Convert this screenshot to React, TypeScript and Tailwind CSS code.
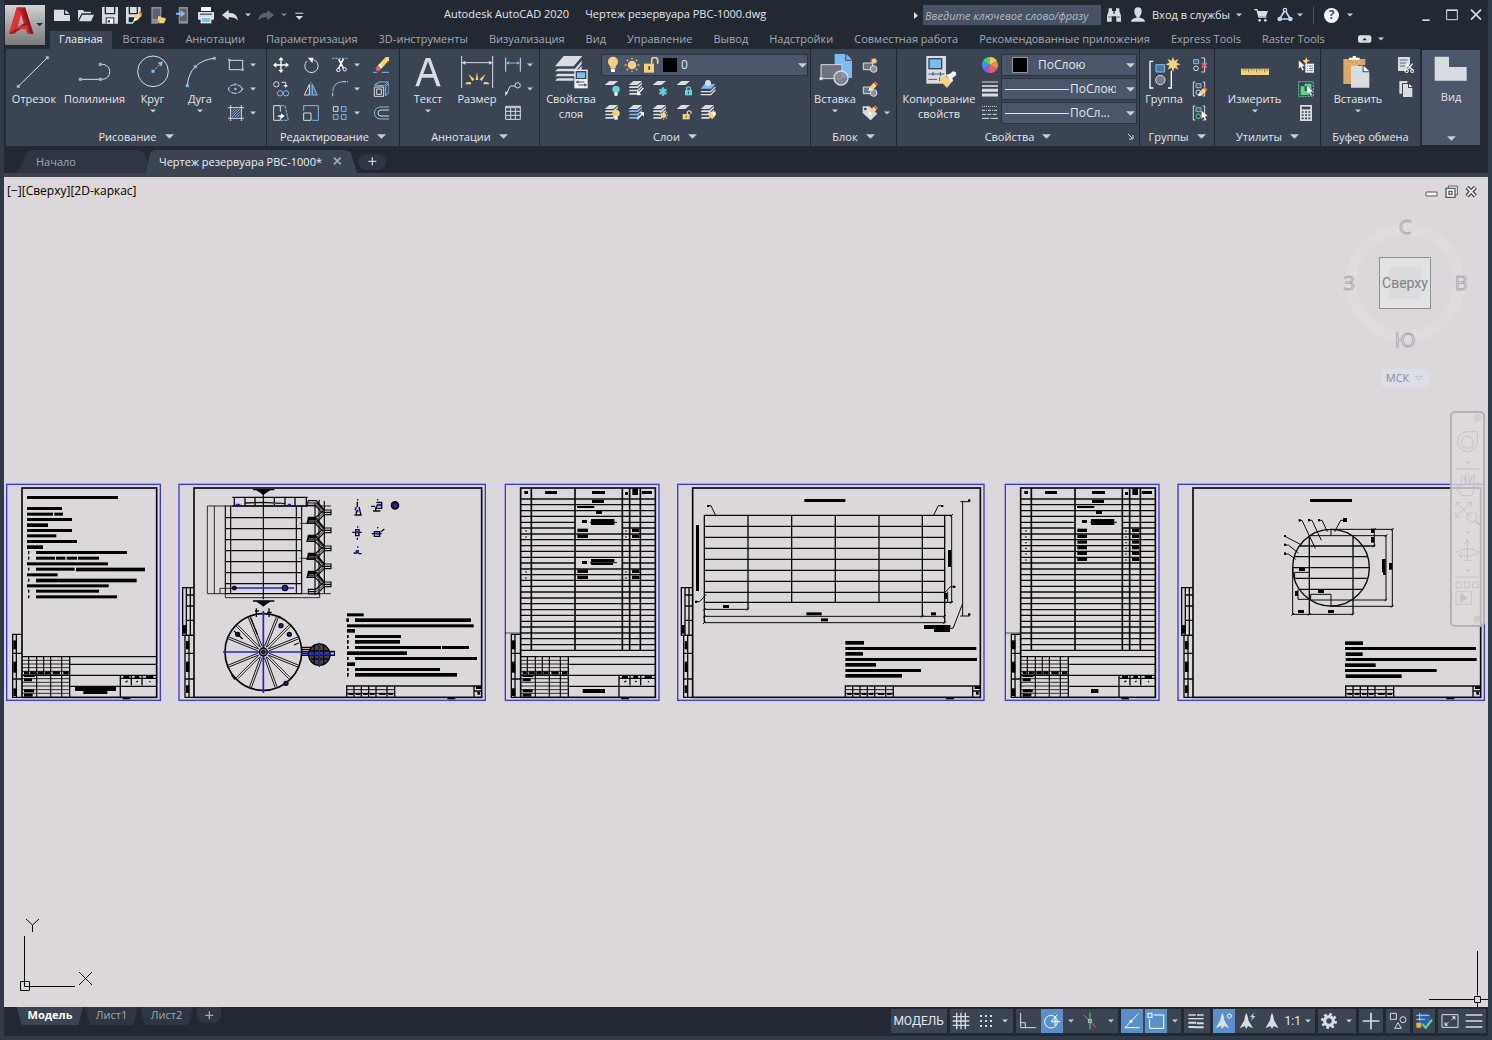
import React from 'react';

const L = '#d9dde2';
const B = '#7cbcf0';
const Y = '#f7d07c';
const R = '#e8625c';
const G = '#5fcf92';
const T = '#62d3d6';
const W = '#ffffff';
const D = '#3b4453';
const K = '#0a0a0c';

interface PicProps {
  w?: number;
  h?: number;
  children: React.ReactNode;
}

// Icons are drawn on a grid of three units per pixel
const Pic: React.FC<PicProps> = ({ w = 16, h = 16, children }) => (
  <svg width={w} height={h} viewBox={`0 0 ${w * 3} ${h * 3}`} fill="none" stroke="none" aria-hidden="true" className="shrink-0">
    {children}
  </svg>
);

const Caret: React.FC<{ small?: boolean; color?: string }> = ({ small, color = '#c9ced6' }) => (
  <svg width={small ? 6 : 9} height={small ? 4 : 5} viewBox="0 0 8 4" className="shrink-0" aria-hidden="true">
    <path d="M0 0h8l-4 4z" fill={color} />
  </svg>
);

const Dot = ({ x, y, s = 9, c = B }: { x: number; y: number; s?: number; c?: string }) => (
  <rect x={x - s / 2} y={y - s / 2} width={s} height={s} fill={c} />
);

const Pencil = () => (
  <g>
    <path d="M22 42l4-12 10 9z" fill={W} />
    <path d="M26 30l12-13 9 9-12 13z" fill={Y} />
    <path d="M38 17l4-4 9 8-4 5z" fill={R} />
  </g>
);

const Cursor = ({ x, y }: { x: number; y: number }) => (
  <path d={`M${x} ${y}v26l6-6 5 11 5-2-5-11h9z`} fill={W} stroke={D} strokeWidth="1" />
);

const Layers = ({ tint = L, one = false }: { tint?: string; one?: boolean }) => (
  <g>
    <path d="M16 3h26L28 15H2z" fill={L} />
    {!one && (
      <g fill={tint}>
        <path d="M6 19h22l14-12v5L30 24H2z" />
        <path d="M6 29h22l14-12v5L30 34H2z" />
        <path d="M6 39h20l8-8v5l-6 8H2z" />
      </g>
    )}
  </g>
);

const Bulb = ({ x, y, c }: { x: number; y: number; c: string }) => (
  <g>
    <circle cx={x} cy={y} r="11" fill={c} />
    <rect x={x - 5} y={y + 9} width="10" height="10" fill={W} />
  </g>
);

const rays = [0, 45, 90, 135, 180, 225, 270, 315];

const Sun = ({ x, y, r = 8 }: { x: number; y: number; r?: number }) => (
  <g>
    <circle cx={x} cy={y} r={r} fill={Y} />
    {rays.map((a) => (
      <path key={a} d={`M${x} ${y - r * 1.3}v${-r * 0.4}`} stroke={Y} strokeWidth="4" transform={`rotate(${a} ${x} ${y})`} />
    ))}
  </g>
);

const Lock = ({ x, y, c, open }: { x: number; y: number; c: string; open?: boolean }) => (
  <g>
    <rect x={x} y={y} width="21" height="16" fill={c} />
    <path d={open ? `M${x + 14} ${y}v-6a6 6 0 0 1 11 0v5` : `M${x + 5} ${y}v-6a6 6 0 0 1 11 0v6`} stroke={c} strokeWidth="4" />
    <rect x={x + 9} y={y + 5} width="3" height="6" fill={D} />
  </g>
);

const Star = ({ x, y, r }: { x: number; y: number; r: number }) => {
  const pts = Array.from({ length: 16 }, (_, i) => {
    const a = (Math.PI * i) / 8;
    const q = i % 2 ? r * 0.5 : r;
    return `${x + q * Math.sin(a)},${y - q * Math.cos(a)}`;
  }).join(' ');
  return <polygon points={pts} fill={Y} />;
};

/* ---------- title bar ---------- */

const AppLogo = () => (
  <svg width="40" height="40" viewBox="0 0 118 118" aria-hidden="true">
    <defs>
      <linearGradient id="appBg" x1="0" y1="0" x2="0" y2="1">
        <stop offset="0" stopColor="#d4d4d4" />
        <stop offset="0.5" stopColor="#a3a3a3" />
        <stop offset="1" stopColor="#7b7b7b" />
      </linearGradient>
    </defs>
    <rect width="118" height="118" fill="url(#appBg)" />
    <path d="M35 7h24l25 78H66L47 28 31 84H12z" fill="#c8202a" />
    <path d="M35 7l12 21-16 56H12z" fill="#e03038" />
    <path d="M12 84l46-32 12 6-48 27z" fill="#a01820" />
    <path d="M24 66l44-6 6 12-46-2z" fill="#d4323a" />
    <path d="M59 7l25 78-9 1L50 15z" fill="#98141c" />
    <path d="M92 53h20l-10 10z" fill="#2c2c2c" />
  </svg>
);

const quickTools: { name: string; icon: React.ReactNode }[] = [
  { name: 'Создать', icon: <><path d="M0 8h30v16h18v18H0z" fill={L} /><path d="M34 8l13 12H34z" fill={L} /></> },
  { name: 'Открыть', icon: <><path d="M0 40V9h15l4 5h20v5H11z" fill={L} /><path d="M13 23h35l-9 20H3z" fill={L} /></> },
  { name: 'Сохранить', icon: <><path d="M0 0h8v22h32V0h8v50H0z" fill={L} /><path d="M12 0h24v18H12z" fill={L} /><path d="M11 31h26v19H11z" fill="#222933" /><path d="M14 34h20v16H14z" fill={W} /><path d="M17 40h7v6h-7z" fill="#222933" /></> },
  { name: 'Сохранить как', icon: <><path d="M0 0h8v22h28V0h8v22L20 50H0z" fill={L} /><path d="M12 0h20v18H12z" fill={L} /><path d="M8 31h22v5L18 46H8z" fill="#222933" /><Pencil /></> },
  { name: 'Открыть из облака', icon: <><path d="M4 0h30v26H24v24H4z" fill="#8a9099" /><path d="M8 5h22v30H8z" fill="#5a626e" /><path d="M24 28h9l3 4h10v4H32l-8 12z" fill={Y} /><path d="M31 36h17l-6 13H25z" fill={Y} /></> },
  { name: 'Сохранить в облаке', icon: <><path d="M14 0h28v50H14z" fill="#8a9099" /><path d="M18 5h20v37H18z" fill="#5a626e" /><path d="M6 17h14V9l14 11-14 11v-8H6z" fill={B} /></> },
  { name: 'Печать', icon: <><path d="M9 0h30v12H9z" fill={W} /><path d="M0 15h48v23H0z" fill={L} /><path d="M6 20h36v3H6z" fill="#222933" /><path d="M8 31h32v18H8z" fill={W} /><path d="M11 33h26v13H11z" fill={B} /></> },
  { name: 'Отменить', icon: <path d="M0 24L20 8v9q26 0 28 24-8-11-28-10v9z" fill={L} /> },
];

const TitleBar = () => (
  <div className="flex h-[28px] items-center text-[#e3e6ea]">
    <div className="flex w-[390px] items-center gap-2 pt-[2px]">
      {quickTools.map((t) => (
        <button key={t.name} type="button" aria-label={t.name}>
          <Pic h={17}>{t.icon}</Pic>
        </button>
      ))}
      <span className="-mx-px"><Caret small /></span>
      <button type="button" aria-label="Повторить">
        <Pic h={17}><path d="M48 24L28 8v9Q2 17 0 41q8-11 28-10v9z" fill="#5a636f" /></Pic>
      </button>
      <span className="-ml-px"><Caret small color="#7b838f" /></span>
      <button type="button" aria-label="Настройка панели">
        <Pic w={9} h={17}><path d="M1 17h24v3H1zM2 27h22L13 38z" fill={L} /></Pic>
      </button>
    </div>
    <div className="flex gap-4 whitespace-nowrap">
      <span>Autodesk AutoCAD 2020</span>
      <span>Чертеж резервуара РВС-1000.dwg</span>
    </div>
    <div className="ml-auto flex items-center pt-[2px]">
      <Pic w={6} h={9}><path d="M3 3v21l12-10z" fill={L} /></Pic>
      <input
        aria-label="Поиск"
        placeholder="Введите ключевое слово/фразу"
        className="ml-1 h-5 w-[178px] bg-[#475264] px-[2px] italic placeholder:text-[#b4bac4]"
      />
      <button type="button" aria-label="Найти" className="ml-[5px]">
        <Pic><path d="M8 4h10v8h4v8h4v-8h4V4h10v8l5 14v18H31V28H17v16H3V26l5-14z" fill={L} /><path d="M6 30h10M33 30h10" stroke="#222933" strokeWidth="2" /></Pic>
      </button>
      <button type="button" className="ml-2 flex items-center gap-[6px]">
        <Pic><path d="M13 14q0-13 11-13t11 13q-1 10-6 13v5h-10v-5q-5-3-6-13z" fill={L} /><path d="M3 44q1-10 16-12h10q15 2 16 12z" fill={L} /></Pic>
        Вход в службы
        <Caret small />
      </button>
      <button type="button" aria-label="Магазин" className="ml-[11px]">
        <Pic><path d="M4 8h8l6 22h22" stroke={L} strokeWidth="4" /><path d="M12 12h33l-6 16H17z" fill={L} /><circle cx="20" cy="40" r="4" fill={L} /><circle cx="37" cy="40" r="4" fill={L} /></Pic>
      </button>
      <button type="button" aria-label="Autodesk 360" className="ml-2 flex items-center gap-1">
        <Pic><path d="M24 9L8 36h32z" stroke="#c5d4f2" strokeWidth="5" /><circle cx="24" cy="9" r="7" fill="#c5d4f2" /><circle cx="8" cy="36" r="7" fill="#c5d4f2" /><circle cx="40" cy="36" r="7" fill="#c5d4f2" /><circle cx="24" cy="9" r="3" fill="#222933" /></Pic>
        <Caret small />
      </button>
      <span className="ml-[10px] h-[18px] w-px bg-[#4a5361]" />
      <button type="button" aria-label="Справка" className="ml-[10px] flex items-center gap-2">
        <span className="flex size-[15px] items-center justify-center rounded-full bg-[#f2f5fa] text-[12px] font-bold text-[#2b50a8]">?</span>
        <Caret small />
      </button>
      <button type="button" aria-label="Свернуть" className="ml-[68px]">
        <Pic w={12} h={14}><path d="M4 34h22v5H4z" fill={L} /></Pic>
      </button>
      <button type="button" aria-label="Развернуть" className="ml-[13px]">
        <Pic w={12} h={14}><path d="M2 6h32v29H2z" stroke={L} strokeWidth="3" /><path d="M1 7h34" stroke={L} strokeWidth="4" /></Pic>
      </button>
      <button type="button" aria-label="Закрыть" className="mr-[6px] ml-[12px]">
        <Pic w={12} h={14}><path d="M3 5l30 30M33 5L3 35" stroke={L} strokeWidth="5" /></Pic>
      </button>
    </div>
  </div>
);

const menuTabs = ['Вставка', 'Аннотации', 'Параметризация', '3D-инструменты', 'Визуализация', 'Вид', 'Управление', 'Вывод', 'Надстройки', 'Совместная работа', 'Рекомендованные приложения', 'Express Tools', 'Raster Tools'];

const MenuTabs = () => (
  <nav className="flex h-[21px] items-end gap-px text-[#a3a9b3]">
    <button type="button" className="h-[18px] bg-[#3b4453] px-[9px] pb-[3px] leading-[15px] text-[#eef0f3]">Главная</button>
    {menuTabs.map((t) => (
      <button key={t} type="button" className="h-[18px] px-[10px] pb-[3px] leading-[15px] whitespace-nowrap">{t}</button>
    ))}
    <button type="button" aria-label="Свернуть ленту" className="ml-[22px] flex h-[20px] items-center gap-[6px]">
      <Pic w={14} h={8}><rect x="0" y="1" width="40" height="22" rx="6" fill={L} /><path d="M13 16h14l-7-8z" fill="#222933" /></Pic>
      <Caret small />
    </button>
  </nav>
);

/* ---------- ribbon ---------- */

interface PanelProps {
  title: string;
  grow: string;
  caret?: boolean;
  corner?: boolean;
  children: React.ReactNode;
}

const Panel: React.FC<PanelProps> = ({ title, grow, caret = true, corner, children }) => (
  <section className={`flex h-[97px] basis-0 flex-col bg-[#3b4453] ${grow}`}>
    <div className="flex h-[78px] pt-1">{children}</div>
    <div className="flex h-[19px] items-center">
      <button type="button" className="flex flex-1 items-center justify-center gap-2 whitespace-nowrap">
        {title}
        {caret && <Caret />}
      </button>
      {corner && (
        <button type="button" aria-label="Параметры панели" className="mr-[5px] -ml-3">
          <Pic w={7} h={7}><path d="M3 3l12 12M18 6v12H6" stroke={L} strokeWidth="3" /></Pic>
        </button>
      )}
    </div>
  </section>
);

interface BigProps {
  label: string;
  second?: string;
  width: string;
  caret?: boolean;
  children: React.ReactNode;
}

const Big: React.FC<BigProps> = ({ label, second, width, caret, children }) => (
  <button type="button" className={`flex shrink-0 flex-col items-center pt-px leading-[15px] ${width}`}>
    <Pic w={36} h={36}>{children}</Pic>
    <span className="mt-px whitespace-nowrap">{label}</span>
    {second && <span>{second}</span>}
    {caret && <span className="mt-[3px]"><Caret small /></span>}
  </button>
);

const Small: React.FC<{ name: string; caret?: boolean; children: React.ReactNode }> = ({ name, caret, children }) => (
  <button type="button" aria-label={name} className="flex h-6 items-center gap-[6px]">
    <Pic>{children}</Pic>
    {caret && <Caret small />}
  </button>
);

const DrawPanel = () => (
  <Panel title="Рисование" grow="grow-[260]">
    <Big label="Отрезок" width="w-[56px]"><path d="M7 97L94 11" stroke={L} strokeWidth="3" /><Dot x={94} y={11} /><Dot x={7} y={97} /></Big>
    <Big label="Полилиния" width="w-[65px]"><path d="M10 76h66a22 22 0 0 0 0-45h-6" stroke={L} strokeWidth="3" /><Dot x={10} y={76} /><Dot x={70} y={76} /><Dot x={70} y={31} /></Big>
    <Big label="Круг" width="w-[51px]" caret><circle cx="54" cy="52" r="46" stroke={L} strokeWidth="3" /><Dot x={54} y={52} /><path d="M60 46l14-14" stroke={B} strokeWidth="3" strokeDasharray="9 3" /><path d="M84 22L80 38 68 26z" fill={B} /></Big>
    <Big label="Дуга" width="w-[44px]" caret><path d="M16 95Q19 58 40 38 62 16 97 13" stroke={L} strokeWidth="3" /><Dot x={97} y={13} /><Dot x={40} y={38} /><Dot x={16} y={95} /></Big>
    <div className="ml-[6px] flex flex-col">
      <Small name="Прямоугольник" caret><path d="M4 10h40v28H4z" stroke={L} strokeWidth="3" /><Dot x={4} y={9} s={7} /><Dot x={44} y={38} s={7} /></Small>
      <Small name="Эллипс" caret><ellipse cx="22" cy="24" rx="20" ry="13" stroke={L} strokeWidth="3" strokeDasharray="17 4" /><Dot x={22} y={24} s={7} /><Dot x={43} y={24} s={6} /><Dot x={22} y={10} s={6} /></Small>
      <Small name="Штриховка" caret><path d="M8 0v48M40 0v48M0 8h48M0 40h48" stroke={L} strokeWidth="3" /><path d="M12 20l8-8M12 28l16-16M12 36l24-24M20 36l16-16M28 36l8-8" stroke={B} strokeWidth="3" /></Small>
    </div>
  </Panel>
);

const EditPanel = () => (
  <Panel title="Редактирование" grow="grow-[132]">
    <div className="ml-[6px] grid auto-rows-[24px] grid-cols-[30px_29px_41px_16px]">
      <Small name="Перенести"><path d="M24 8v32M8 24h32" stroke={W} strokeWidth="4" /><path d="M24 0l8 10H16zM24 48l8-10H16zM0 24l10-8v16zM48 24l-10-8v16z" fill={W} /></Small>
      <Small name="Повернуть"><path d="M32 8A20 20 0 1 1 12 12" stroke={L} strokeWidth="3" /><path d="M14 2h18l-4 16z" fill={W} /></Small>
      <Small name="Обрезать" caret><path d="M0 4h48" stroke={B} strokeWidth="3" strokeDasharray="7 3" /><path d="M20 6l14 28M34 6L20 34" stroke={W} strokeWidth="5" /><circle cx="19" cy="39" r="5" stroke={W} strokeWidth="3" /><circle cx="38" cy="37" r="5" stroke={W} strokeWidth="3" /></Small>
      <Small name="Стереть"><path d="M0 46h12M26 46h22" stroke={B} strokeWidth="3" /><path d="M14 26L38 0h10v10L24 36z" fill={Y} /><path d="M14 26l10 10-6 6q-4 2-8-2t-2-8z" fill={R} /><path d="M16 24l3-3 9 9-3 4z" fill={W} /></Small>
      <Small name="Копировать"><circle cx="10" cy="10" r="8" stroke={L} strokeWidth="3" /><path d="M26 4h12v10" stroke={L} strokeWidth="3" /><path d="M31 12h14l-7 8z" fill={W} /><circle cx="21" cy="37" r="8" stroke={B} strokeWidth="3" /><circle cx="39" cy="37" r="8" stroke={B} strokeWidth="3" /></Small>
      <Small name="Зеркало"><path d="M19 10v32H4z" stroke={L} strokeWidth="3" /><path d="M28 10v32h15z" stroke={B} strokeWidth="3" fill="#46678a" /><path d="M24 2v44" stroke={B} strokeWidth="2" /></Small>
      <Small name="Сопряжение" caret><path d="M2 46V34M32 2h16" stroke={L} strokeWidth="3" strokeDasharray="10 3" /><path d="M2 32Q4 4 32 2" stroke={B} strokeWidth="3" /></Small>
      <Small name="Расчленить"><path d="M4 18h28v28H4zM11 24h14v16H11z" stroke={L} strokeWidth="3" /><path d="M4 12L18 3h28L34 14zM38 16l10-8v26L38 44z" stroke={B} strokeWidth="3" /></Small>
      <Small name="Растянуть"><path d="M22 32V46H2V2h20v18" stroke={L} strokeWidth="3" /><path d="M24 2h12l10 44H22" stroke={B} strokeWidth="3" strokeDasharray="9 3" /><path d="M14 33h14" stroke={W} strokeWidth="4" /><path d="M24 25l11 8-11 8z" fill={W} /></Small>
      <Small name="Масштаб"><path d="M2 18V2h44v44H28" stroke={B} strokeWidth="3" /><path d="M2 24h22v22H2z" stroke={L} strokeWidth="3" /></Small>
      <Small name="Массив" caret><path d="M4 5h14v14H4z" stroke={L} strokeWidth="3" /><path d="M28 5h14v14H28zM4 29h14v14H4zM28 29h14v14H28z" stroke={B} strokeWidth="3" /></Small>
      <Small name="Подобие"><path d="M48 6H22a18 18 0 0 0 0 36h26" stroke={B} strokeWidth="3" /><path d="M48 15H24a9 9 0 0 0 0 18h24" stroke={L} strokeWidth="3" /></Small>
    </div>
  </Panel>
);

const AnnotationPanel = () => (
  <Panel title="Аннотации" grow="grow-[139]">
    <Big label="Текст" width="w-[56px]" caret><path d="M16 97L47 12h14l31 85H80l-9-26H36l-9 26zM40 60h28L54 22z" fill={L} fillRule="evenodd" /></Big>
    <Big label="Размер" width="w-[42px]">
      <path d="M8 6v96M101 6v96M12 26h86" stroke={L} strokeWidth="3" />
      <path d="M8 26l11-6v12zM101 26l-11-6v12z" fill={L} />
      <path d="M50 78l4-24 4 24zM40 82L28 60l18 15zM68 82l12-22-18 15zM36 91H18q4-10 18-6zM74 91h18q-4-10-18-6z" fill={Y} />
    </Big>
    <div className="ml-[7px] flex flex-col">
      <Small name="Линейный размер" caret><path d="M2 2v42M46 2v42" stroke={L} strokeWidth="3" /><path d="M6 18h36" stroke={B} strokeWidth="3" /><path d="M3 18l9-5v10zM45 18l-9-5v10z" fill={B} /></Small>
      <Small name="Выноска" caret><circle cx="38" cy="13" r="8" stroke={L} strokeWidth="3" /><path d="M30 15H16L4 38" stroke={L} strokeWidth="3" /><path d="M0 45l1-14 9 4z" fill={L} /></Small>
      <Small name="Таблица"><path d="M2 4h44v39H2zM2 8h44M2 19h44M2 31h44M17 10v33M31 10v33" stroke={L} strokeWidth="3" /></Small>
    </div>
  </Panel>
);

const LayerPanel = () => (
  <Panel title="Слои" grow="grow-[270]">
    <Big label="Свойства" second="слоя" width="w-[62px]">
      <path d="M32 6h56L62 37H6z" fill={L} />
      <path d="M14 44h52l20-24v10L68 52H6zM14 59h52l20-24v10L66 67H6zM14 73h48v7H6z" fill={L} />
      <path d="M64 47h40v56H64z" fill="#eef0f3" />
      <path d="M68 51h32v24H68z" fill="#3b4453" />
      <path d="M72 55h24v17H72z" fill={B} />
      <path d="M70 84h24M76 93h24" stroke="#4b5563" strokeWidth="3" />
      <path d="M76 79v10l-8-5zM94 88v10l8-5z" fill="#4b5563" />
    </Big>
    <div className="mr-[2px] -ml-px flex flex-1 flex-col">
      <div className="mt-px flex h-[22px] items-center border border-[#2a323e] bg-[#4b566a] pl-[3px]">
        <Pic h={18}><circle cx="24" cy="17" r="15" fill={Y} /><path d="M16 25h16v12H16z" fill={Y} /><path d="M18 38h12v10H18z" fill={W} /></Pic>
        <span className="ml-[3px]"><Pic><Sun x={24} y={24} r={13} /></Pic></span>
        <span className="ml-[3px]"><Pic><path d="M3 20h30v27H3z" fill={Y} /><path d="M26 20V10a9 9 0 0 1 18 0v10" stroke={Y} strokeWidth="5" /><path d="M16 28h5v10h-5z" fill={D} /></Pic></span>
        <span className="ml-[4px] size-[14px] bg-black" />
        <select aria-label="Слой" className="ml-1 flex-1 appearance-none bg-transparent text-[12px]">
          <option>0</option>
        </select>
        <Caret />
      </div>
      <div className="ml-[3px] grid w-[120px] auto-rows-[24px] grid-cols-5">
        <Small name="Отключить слой"><Layers one /><Bulb x={36} y={28} c={T} /></Small>
        <Small name="Изолировать слой"><Layers /><path d="M46 24L32 40" stroke={W} strokeWidth="4" /><path d="M27 46V32l13 13z" fill={W} /></Small>
        <Small name="Заморозить слой"><Layers one /><path d="M33 22v26M22 28l22 14M44 28L22 42" stroke={T} strokeWidth="5" /><circle cx="33" cy="35" r="9" stroke={T} strokeWidth="3" /></Small>
        <Small name="Блокировать слой"><Layers one /><Lock x={27} y={30} c={T} /></Small>
        <Small name="Сделать текущим"><path d="M14 12h32L34 26H2z" fill={B} /><circle cx="24" cy="9" r="9" fill={L} /><path d="M2 35h30l14-14M2 44h30l14-14" stroke={L} strokeWidth="4" /></Small>
        <Small name="Включить все слои"><Layers /><Bulb x={36} y={28} c={Y} /></Small>
        <Small name="Отменить изоляцию"><Layers tint={B} /><path d="M28 46l14-16" stroke={W} strokeWidth="4" /><path d="M48 24v14L35 25z" fill={W} /></Small>
        <Small name="Разморозить все слои"><Layers /><Sun x={35} y={34} r={8} /></Small>
        <Small name="Разблокировать слой"><Layers one /><Lock x={20} y={30} c={Y} open /></Small>
        <Small name="Копировать свойства слоя"><Layers /><path d="M22 28l10-6 14 14-10 10z" fill={Y} /><path d="M34 26l12-4 2 10-6 4z" fill={W} /></Small>
      </div>
    </div>
  </Panel>
);

const BlockGlyph = () => (
  <g>
    <path d="M4 18h28v20H4z" fill="#6c7480" stroke={L} strokeWidth="3" />
    <circle cx="35" cy="36" r="10" fill="#8a919c" stroke={L} strokeWidth="3" />
  </g>
);

const BlockPanel = () => (
  <Panel title="Блок" grow="grow-[85]">
    <Big label="Вставка" width="w-[48px]" caret>
      <path d="M53 0h32v20h20v52H53z" fill={B} /><path d="M88 0l17 17H88z" fill={B} />
      <path d="M12 32h63v42H12z" fill="#6c7480" stroke={L} strokeWidth="3" />
      <circle cx="72" cy="72" r="21" fill="#868d98" fillOpacity="0.85" stroke={L} strokeWidth="4" />
      <Dot x={12} y={74} c={L} />
    </Big>
    <div className="ml-[3px] flex flex-col">
      <Small name="Создать блок"><BlockGlyph /><Star x={36} y={12} r={12} /></Small>
      <Small name="Редактор блоков"><BlockGlyph /><g transform="translate(-3 -12)"><Pencil /></g></Small>
      <Small name="Атрибуты" caret><path d="M2 4h20l24 22-20 20L2 24z" fill={L} /><circle cx="10" cy="12" r="4" fill={D} /><g transform="translate(-3 -12)"><Pencil /></g></Small>
    </div>
  </Panel>
);

const colorWheel = [['#f7c948', 0], ['#f08a3c', 60], ['#ef5b6e', 120], ['#8c5bd6', 180], ['#3f8ee8', 240], ['#4fc98a', 300]] as const;

const comboBox = 'flex h-[22px] items-center border border-[#2a323e] bg-[#4b566a] pr-px text-[12px]';

const PropertiesPanel = () => (
  <Panel title="Свойства" grow="grow-[242]" corner>
    <Big label="Копирование" second="свойств" width="w-[84px]">
      <path d="M16 6h59v83H16z" fill={L} /><path d="M22 12h42v34H22z" fill="#3b4453" /><path d="M26 16h34v26H26z" fill={B} />
      <path d="M22 60h48M22 76h26M36 54v12M56 70v12M58 54v12" stroke="#4b5563" strokeWidth="3" />
      <path d="M56 78l16-14 20 20-14 18z" fill={Y} /><path d="M74 62l12-2 10-8 8 2 2 9-12 10 2 8-6 4z" fill={W} />
    </Big>
    <div className="ml-px flex flex-col">
      <Small name="Цвет">
        {colorWheel.map(([c, a]) => (
          <path key={c} d="M24 24V0a24 24 0 0 1 20.8 12z" fill={c} transform={`rotate(${a} 24 24)`} />
        ))}
      </Small>
      <Small name="Вес линий"><path d="M0 3h48" stroke={L} strokeWidth="3" /><path d="M0 15h48" stroke={L} strokeWidth="5" /><path d="M0 28h48M0 42h48" stroke={L} strokeWidth="9" /></Small>
      <Small name="Тип линий"><path d="M0 4h48" stroke={L} strokeWidth="3" strokeDasharray="3 3" /><path d="M0 16h48" stroke={L} strokeWidth="3" strokeDasharray="9 3 3 3" /><path d="M0 28h48" stroke={L} strokeWidth="3" strokeDasharray="12 4" /><path d="M0 40h48" stroke={L} strokeWidth="3" strokeDasharray="22 4" /></Small>
    </div>
    <div className="mr-[2px] ml-[3px] flex min-w-0 flex-1 flex-col gap-[2px] pt-px">
      <label className={comboBox}>
        <span className="mx-[10px] size-4 shrink-0 border border-[#8d96a3] bg-black" />
        <select aria-label="Цвет объекта" className="min-w-0 flex-1 appearance-none bg-transparent"><option>ПоСлою</option></select>
        <Caret />
      </label>
      <label className={comboBox}>
        <span className="ml-[3px] h-px w-16 shrink-0 bg-[#e3e6ea]" />
        <select aria-label="Вес линии" className="mr-[10px] w-[47px] min-w-0 flex-1 appearance-none overflow-hidden bg-transparent pl-px"><option>ПоСлою</option></select>
        <Caret />
      </label>
      <label className={comboBox}>
        <span className="ml-[3px] h-px w-16 shrink-0 bg-[#e3e6ea]" />
        <select aria-label="Тип линии" className="min-w-0 flex-1 appearance-none bg-transparent pl-px"><option>ПоСл...</option></select>
        <Caret />
      </label>
    </div>
  </Panel>
);

const GroupGlyph = ({ c = B }: { c?: string }) => (
  <g strokeWidth="3">
    <path d="M10 3H4v42h6M32 3h6v42h-6" stroke={L} />
    <path d="M12 8h15v12H12z" stroke={c} fill="#4a6078" />
    <circle cx="19" cy="34" r="7" stroke={c === B ? L : c} />
  </g>
);

const GroupsPanel = () => (
  <Panel title="Группы" grow="grow-[74]">
    <Big label="Группа" width="w-[48px]">
      <path d="M22 22H12v80h10M66 102h10V50" stroke={W} strokeWidth="4" />
      <path d="M30 32h26v22H30z" fill="#4a78a4" stroke={B} strokeWidth="3" />
      <circle cx="43" cy="78" r="14" fill="#747b86" stroke={L} strokeWidth="3" />
      <Star x={81} y={31} r={23} />
    </Big>
    <div className="ml-1 flex flex-col">
      <Small name="Разгруппировать"><path d="M28 3h10v42H28" stroke={L} strokeWidth="3" /><path d="M5 8h15v12H5z" stroke={B} strokeWidth="3" fill="#4a6078" /><circle cx="12" cy="34" r="7" stroke={L} strokeWidth="3" /><path d="M30 18l14 14M44 18L30 32" stroke={R} strokeWidth="6" /></Small>
      <Small name="Редактирование группы"><GroupGlyph /><g transform="translate(-4 4)"><Pencil /></g></Small>
      <Small name="Выбор группы"><GroupGlyph c={G} /><Cursor x={28} y={16} /></Small>
    </div>
  </Panel>
);

const UtilitiesPanel = () => (
  <Panel title="Утилиты" grow="grow-[105]">
    <Big label="Измерить" width="w-[79px]" caret>
      <path d="M12 44h84v19H12z" fill={Y} />
      <path d="M19 44v7M27 44v7M35 44v11M43 44v7M51 44v7M59 44v11M67 44v7M75 44v7M83 44v11M91 44v7" stroke="#5a5140" strokeWidth="2" />
    </Big>
    <div className="ml-1 flex flex-col">
      <Small name="Быстрый выбор"><path d="M14 10l8-2 3-8 3 8 8 3-8 3-3 8z" fill={Y} /><path d="M22 20h26v27H22z" fill={W} /><path d="M26 27h4M33 27h12M26 34h4M33 34h12M26 41h4M33 41h12" stroke="#3f7fc4" strokeWidth="3" /><Cursor x={2} y={10} /></Small>
      <Small name="Выбрать все"><path d="M2 2h44v44H2z" stroke={G} strokeWidth="3" strokeDasharray="6 3" /><path d="M8 16h12v14h14v12H8zM20 8h20v22H26V16h-6z" fill={G} /><Cursor x={27} y={14} /></Small>
      <Small name="Калькулятор"><path d="M6 0h36v48H6z" fill={L} /><path d="M11 5h26v8H11z" fill={D} /><path d="M11 21h26M11 30h26M11 40h26" stroke={D} strokeWidth="5" strokeDasharray="6 4" /></Small>
    </div>
  </Panel>
);

const ClipboardPanel = () => (
  <Panel title="Буфер обмена" grow="grow-[99]" caret={false}>
    <Big label="Вставить" width="w-[74px]" caret>
      <path d="M10 15h66v18H54v57H10z" fill="#dda865" />
      <path d="M27 18v-7h10q0-6 6-6t6 6h10v7z" fill={W} />
      <path d="M33 35h35v20h20v46H33z" fill={L} /><path d="M71 35l17 17H71z" fill={W} />
    </Big>
    <div className="ml-[3px] flex flex-col">
      <Small name="Вырезать"><path d="M0 0h36v20L22 42H0z" fill={L} /><path d="M5 9h24M5 18h20M5 27h16" stroke="#626b78" strokeWidth="3" /><path d="M26 20l18 20M44 20L26 40" stroke={W} strokeWidth="4" /><circle cx="26" cy="42" r="5" stroke={W} strokeWidth="3" /><circle cx="43" cy="42" r="5" stroke={W} strokeWidth="3" /></Small>
      <Small name="Копировать в буфер"><path d="M4 0h24v6H12v32H4z" fill={L} /><path d="M15 9h15v12h13v27H15z" fill={L} /><path d="M33 9l10 9H33z" fill={W} /></Small>
    </div>
  </Panel>
);

const Ribbon = () => (
  <div className="mr-[8px] ml-[2px] flex gap-px text-[#e3e6ea]">
    <DrawPanel />
    <EditPanel />
    <AnnotationPanel />
    <LayerPanel />
    <BlockPanel />
    <PropertiesPanel />
    <GroupsPanel />
    <UtilitiesPanel />
    <ClipboardPanel />
    <button type="button" className="mt-px ml-px flex h-[95px] grow-[58] basis-0 flex-col items-center bg-[#4b566a] pt-[3px]">
      <Pic w={36} h={36}><path d="M5 11h43v31h53v41H5z" fill={L} /></Pic>
      <span className="leading-[15px]">Вид</span>
      <span className="mt-auto mb-[4px]"><Caret /></span>
    </button>
  </div>
);

/* ---------- drawing area ---------- */

type Bar = [number, number, number, number?];

// Lines of lettering collapse into solid bars at this zoom level
const Bars: React.FC<{ items: Bar[]; h?: number }> = ({ items, h = 9 }) => (
  <g fill="#000" stroke="none">
    {items.map(([x, y, w, bh], i) => (
      <rect key={i} x={x} y={y} width={w} height={bh ?? h} />
    ))}
  </g>
);

const range = (n: number) => Array.from({ length: n }, (_, i) => i);

const A4Frame: React.FC<{ children?: React.ReactNode }> = ({ children }) => (
  <g>
    <rect width="461" height="648" stroke="#3a3ad8" strokeWidth="4" />
    <rect x="46" y="11" width="404" height="628" strokeWidth="5" />
    <path d="M46 450H18V639H46M29 450V639M18 507H46M18 584H46" strokeWidth="4" />
    <path d="M46 517H450M189 517V639M189 540H450M46 573H450M341 573V639M374 573V603M406 573V603M341 582H450M189 606H450" strokeWidth="4" />
    <path d="M66 517V573M90 517V639M111 517V573M132 517V639M165 517V639" strokeWidth="3.5" />
    {range(10).map((i) => (
      <path key={i} d={`M46 ${528 + i * 11}H189`} strokeWidth="2.5" />
    ))}
    <Bars items={[[20, 468, 10, 27], [20, 532, 10, 33], [20, 612, 10, 23], [52, 561, 12], [70, 561, 18], [93, 561, 16], [114, 561, 16], [138, 561, 22], [170, 561, 16], [52, 573, 32, 5], [52, 582, 24], [52, 615, 30], [52, 628, 26], [350, 573, 18], [384, 573, 14], [418, 573, 22], [348, 640, 23, 5]]} />
    <path d="M357 594l6-5M389 593l5-3M428 593l3-2" strokeWidth="4" />
    {children}
  </g>
);

const A3Frame: React.FC<{ children?: React.ReactNode }> = ({ children }) => (
  <g>
    <rect width="919" height="648" stroke="#3a3ad8" strokeWidth="4" />
    <rect x="45" y="11" width="863" height="628" strokeWidth="5" />
    <path d="M45 453H18V639H45M30 453V639M18 507H45M18 584H45" strokeWidth="4" />
    <path d="M45 310H11V453H45M22 310V453M34 310V453M22 332H45M22 365H45M22 408H45" strokeWidth="4" />
    <path d="M503 639V605H908M525 605V639M547 605V639M569 605V639M591 605V639M624 605V639M647 605V639M885 605V639M885 620H908" strokeWidth="4" />
    <path d="M503 616H647M503 627H647" strokeWidth="3" />
    <Bars items={[[21, 470, 10, 25], [21, 532, 10, 31], [21, 603, 10, 23], [12, 422, 9, 26], [508, 626, 14, 6], [530, 626, 14, 6], [552, 626, 14, 6], [573, 626, 14, 6], [600, 626, 20, 6], [628, 626, 14, 6], [891, 606, 16, 8], [895, 622, 8, 9], [805, 640, 24, 5]]} />
    {children}
  </g>
);

const SpecTable: React.FC<{ skip: number[]; children?: React.ReactNode }> = ({ skip, children }) => (
  <A4Frame>
    <path d="M78 11V498M209 11V498M351 11V498M373 11V498M405 11V498" strokeWidth="5" />
    {range(27).map((i) => {
      const y = Math.round(44 + i * 17.46);
      return <path key={i} d={skip.includes(i) ? `M46 ${y}H209M351 ${y}H450` : `M46 ${y}H450`} strokeWidth="4" />;
    })}
    <path d="M0 446H46" strokeWidth="2" />
    <Bars items={[[57, 20, 11], [119, 20, 36], [260, 20, 39], [359, 23, 9], [381, 12, 17, 20], [409, 20, 31], [260, 47, 36], [215, 65, 52, 6], [272, 80, 18], [230, 107, 15], [257, 104, 70, 18]]} />
    <path d="M254 114H335" strokeWidth="3" />
    {children}
  </A4Frame>
);

const notes: Bar[] = [[61, 35, 273], [61, 68, 105], [61, 85, 78], [143, 85, 26], [61, 101, 135], [61, 117, 63, 11], [61, 134, 135], [61, 150, 88], [61, 167, 150], [61, 183, 48, 11], [88, 200, 273], [88, 217, 57], [148, 217, 28], [180, 217, 31], [214, 217, 63], [61, 234, 243], [88, 250, 116], [208, 250, 207, 11], [61, 267, 92], [88, 283, 302, 11], [61, 300, 245], [88, 316, 189], [88, 333, 243]];

const TankElevation = () => (
  <g>
    <path d="M222 14h64v4h-12l-14 9-7 6-7-6-14-9h-10zM222 348h64v4h-12l-14 9-7 6-7-6-14-9h-10z" fill="#000" stroke="none" />
    <path d="M160 39H386M160 65H386M166 39V65M198 39V65M228 39V65M286 39V65M318 39V65M348 39V65M382 39V65M198 56L253 54 318 58" strokeWidth="4" />
    <path d="M139 65H368V328H139zM155 65V328M352 65V328M253 28V345" strokeWidth="3.5" />
    {range(7).map((i) => (
      <path key={i} d={`M139 ${100 + i * 33}H368`} strokeWidth="3.5" />
    ))}
    <path d="M85 65H139M85 65V328H139M106 65V328M123 328V312H160M139 328V340H422V328M368 65H456M362 117H415M362 222H415M368 328H456" strokeWidth="2.5" />
    <path d="M408 55V332M420 50V332M436 50V328" strokeWidth="3.5" />
    {range(5).map((i) => (
      <g key={i} transform={`translate(0 ${i * 54})`} strokeWidth="3.5">
        <path d="M388 49h24l24 28h20v14h-20l-22 22h-26v-14h22l18-16-20-20h-24zM388 56h26l20 22M412 98l22-20M430 84h26M388 106h24" />
        <path d="M408 54l22 24M412 106l22-20" stroke="#555" />
      </g>
    ))}
    <path d="M160 311H345M170 60h14M300 57h10M326 60h10M354 62v6M421 46v8M421 314v12M253 334v4" stroke="#2222e0" strokeWidth="4" />
    <circle cx="166" cy="311" r="7" fill="#000" />
    <circle cx="318" cy="311" r="8" fill="#2222c0" strokeWidth="4" />
  </g>
);

const spokes = [22, 45, 70, 110, 135, 158, 202, 225, 248, 292, 315, 338];

const TankPlan = () => (
  <g>
    {spokes.map((a) => (
      <path key={a} d="M270 500H366M270 506H366" strokeWidth="2.5" transform={`rotate(${a} 253 503)`} />
    ))}
    <circle cx="253" cy="503" r="115" strokeWidth="5" />
    <path d="M132 503H462M253 380V626" stroke="#2222d0" strokeWidth="5" />
    <circle cx="253" cy="503" r="12" fill="#777" strokeWidth="4" />
    <circle cx="253" cy="503" r="5" fill="#2222d0" strokeWidth="3" />
    {[[306, 424], [331, 450], [176, 450], [321, 597]].map(([x, y]) => (
      <circle key={x} cx={x} cy={y} r="6" fill="#2222a0" strokeWidth="4" />
    ))}
    <path d="M158 572l10 14M232 372v26M228 380h12M270 372v26M264 384h14M345 482l14-6M215 400l20 50M165 440l26 24" strokeWidth="4" />
    <path d="M368 489H400V513H368zM368 495H400M368 501H400M368 508H400M440 501h26v12h-26" strokeWidth="4" />
    <circle cx="421" cy="511" r="32" fill="#444" strokeWidth="4" />
    <path d="M392 500h58M390 512h62M396 524h52M406 484v56M420 478v66M434 484v56" strokeWidth="4" />
    <path d="M385 511H460M421 475V548" stroke="#2222d0" strokeWidth="4" />
    {/* nozzle details */}
    <path d="M535 52v16M532 68l-4 10M526 92h20l-6-24M532 80v12M576 66h12M582 80h22M590 70v10M592 54h16v18h-18l6-12M520 144h28M530 136h10v18h-10zM535 160v6M578 148h30M586 142h16v14h-16zM606 142l10-8M524 206h10M538 208h10M530 200h10" strokeWidth="4" />
    <circle cx="648" cy="63" r="11" fill="#222" strokeWidth="4" />
    <path d="M535 76v8M594 62h12M642 63h12M532 144h8M592 148h8M530 204h10" stroke="#2222e0" strokeWidth="7" />
    <Bars items={[[534, 44, 4, 4], [594, 44, 4, 4], [534, 126, 4, 4], [594, 128, 4, 4], [534, 186, 4, 4]]} />
  </g>
);

const planNotes: Bar[] = [[504, 387, 50], [502, 402, 8, 11], [528, 402, 348, 11], [504, 420, 380], [504, 434, 24, 11], [528, 452, 138], [528, 467, 135, 11], [528, 485, 258], [789, 485, 81], [504, 501, 180, 11], [528, 518, 366], [504, 534, 24, 11], [528, 551, 255], [528, 566, 306, 11], [504, 452, 5], [504, 467, 5, 11], [504, 485, 5], [504, 518, 5], [504, 551, 5], [504, 566, 5, 11]];

const ShellUnrolled = () => (
  <g>
    <path d="M80 93H822M80 354H824M80 93V415M211 93V375M342 93V354M473 93V354M604 93V354M734 93V396M801 93V415" strokeWidth="4" />
    {range(7).map((i) => (
      <path key={i} d={`M80 ${126 + i * 33}H801`} strokeWidth="4" />
    ))}
    <path d="M80 375H211M80 396H801M80 415H801M822 93V354M855 50V395M848 52H876M848 395H876M810 322V354" strokeWidth="3" />
    <path d="M90 64h10l15 32M792 64h-10l-15 30M56 352h10l20-22M830 307h-12l-18 20M770 432h56L855 358" strokeWidth="3" />
    <path d="M76 379l8-8M207 379l8-8M76 400l8-8M730 400l8-8M797 400l8-8M76 419l8-8M797 419l8-8M818 97l8-8M818 358l8-8" strokeWidth="3" />
    <Bars items={[[380, 44, 123], [55, 122, 9, 198], [88, 62, 7, 6], [790, 62, 7, 6], [52, 349, 7, 7], [826, 304, 7, 7], [871, 45, 7, 7], [871, 387, 7, 7], [811, 197, 9, 51], [800, 326, 8, 18], [136, 362, 18], [386, 384, 46], [430, 402, 21], [760, 384, 15], [739, 422, 79, 12], [769, 434, 48]]} />
    <Bars items={[[503, 470, 56, 11], [503, 488, 393], [503, 503, 53, 11], [503, 521, 395], [503, 536, 92, 11], [503, 554, 227], [503, 569, 170, 11]]} />
  </g>
);

const BottomPlan = () => (
  <g>
    <circle cx="459" cy="250" r="115" strokeWidth="4" />
    <path d="M394 154V390M525 154V390M365 185H591M351 217H567M344 250H574M351 282H567M365 315H553" strokeWidth="4" />
    <path d="M394 154H626M394 347H626M459 135H645M459 366H645M624 154V347M643 135V366M589 135V185M459 135V154M459 330V366M344 250V390M344 390H525M350 264H394M350 264V282M360 315V345H394M398 330H459M398 330V347" strokeWidth="3" />
    <path d="M321 156l50 26M321 182h10l30 24M321 209h10l22 16M364 108h8l40 84M394 108h8l28 60M424 108h8l16 34M500 108h-12l-18 34" strokeWidth="3" />
    <path d="M620 158l8-8M620 351l8-8M639 139l8-8M639 370l8-8M585 139l8-8M585 189l8-8M340 394l8-8M390 394l8-8M521 394l8-8" strokeWidth="3" />
    <Bars items={[[396, 44, 126], [318, 152, 6, 6], [318, 178, 6, 7], [318, 204, 6, 8], [362, 104, 5, 8], [390, 104, 6, 7], [420, 104, 6, 7], [495, 101, 12, 12], [579, 133, 9, 13], [579, 158, 9, 17], [612, 224, 11, 40], [615, 262, 8, 10], [633, 236, 9, 20], [363, 251, 18], [420, 317, 18], [351, 320, 9, 15], [360, 377, 18], [450, 377, 18]]} />
    <Bars items={[[501, 471, 54, 11], [501, 488, 393], [503, 504, 51, 11], [503, 521, 393], [501, 537, 92, 11], [501, 554, 275], [503, 570, 168, 11]]} />
  </g>
);

const specRows = (rows: number[], w: number): Bar[] => rows.flatMap((y): Bar[] => [[216, y, w, 10], [380, y, 22, 10], [60, y + 5, 4, 4], [360, y + 5, 4, 4]]);

const Drawing = () => (
  <svg viewBox="12 531 4452 2490" className="absolute inset-0 size-full" fill="none" stroke={K} role="img" aria-label="Листы чертежа">
    <g transform="translate(20 1453)">
      <A4Frame>
        <Bars items={notes} />
        <Bars items={[[64, 200, 4], [64, 217, 4], [64, 250, 4], [64, 283, 4], [64, 316, 4], [64, 333, 4], [205, 608, 123, 12], [230, 620, 72]]} />
      </A4Frame>
    </g>
    <g transform="translate(537 1453)">
      <A3Frame>
        <TankElevation />
        <TankPlan />
        <Bars items={planNotes} />
      </A3Frame>
    </g>
    <g transform="translate(1516 1453)">
      <SpecTable skip={[4, 5, 11]}>
        <Bars items={[...specRows([133, 151, 256, 274], 32), [230, 230, 15], [257, 224, 70], [257, 236, 66, 6], [232, 614, 67, 12]]} />
        <path d="M254 235H335" strokeWidth="3" />
      </SpecTable>
    </g>
    <g transform="translate(2033 1453)">
      <A3Frame><ShellUnrolled /></A3Frame>
    </g>
    <g transform="translate(3016 1453)">
      <SpecTable skip={[4, 5]}>
        <Bars items={[...specRows([133, 151, 168, 185, 202, 220], 29), [257, 614, 22, 12]]} />
      </SpecTable>
    </g>
    <g transform="translate(3534 1453)">
      <A3Frame><BottomPlan /></A3Frame>
    </g>
  </svg>
);

const ViewCube = () => (
  <div className="absolute top-[28px] right-[18px] flex flex-col items-center">
    <svg width="130" height="152" viewBox="0 -10 130 152" role="img" aria-label="Видовой куб">
      <circle cx="65" cy="68" r="54" fill="none" stroke="#e0dcdd" strokeWidth="11" />
      <rect x="39.5" y="42.5" width="51" height="51" fill="#e3e2e2" stroke="#8f8f92" />
      <rect x="49" y="52" width="32" height="32" fill="#dbdcdd" />
      <text x="65" y="73" textAnchor="middle" fontSize="14" fill="#7f8184" className="font-['Roboto']">Сверху</text>
      <g fill="#dfdbdd" stroke="#aaa6a8" strokeWidth="0.8" fontSize="20" textAnchor="middle" className="font-['Open_Sans']">
        <text x="65" y="19">С</text>
        <text x="9" y="75">З</text>
        <text x="121" y="75">В</text>
        <text x="65" y="132">Ю</text>
      </g>
    </svg>
    <button type="button" className="mt-[12px] flex h-[18px] items-center gap-[5px] rounded bg-[#dedee8] px-[5px] text-[#8b8c94]">
      МСК
      <Pic w={10} h={7}><path d="M4 4h22l-11 12z" stroke="#b5b8c8" strokeWidth="2" /></Pic>
    </button>
  </div>
);

const NavBar = () => (
  <div className="absolute top-[234px] right-[3px] rounded-[5px] border-2 border-[#b5b1b4] bg-[#dedada]/80">
    <svg width="31" height="212" viewBox="0 0 93 636" fill="none" stroke="#c6c2c4" strokeWidth="3" aria-hidden="true">
      <circle cx="76" cy="14" r="9" /><path d="M72 10l8 8M80 10l-8 8" />
      <path d="M46 56h30v34a30 30 0 1 1-30-34z" /><circle cx="46" cy="88" r="18" /><path d="M32 100L22 110M60 100l10 10" />
      <path d="M40 146h14l-7 7zM40 356h14l-7 7zM40 470h14l-7 7z" fill="#c6c2c4" stroke="none" />
      <path d="M10 168h72M10 492h72" />
      <path d="M28 248L12 222q0-8 10-4l10 8-6-32q6-8 10 0l6 22-2-32q6-6 10 0l2 30 8-26q8-4 8 4l-4 28 10-12q8 0 6 8L66 232l-6 16z" />
      <path d="M12 268l46 44M12 312l46-44M12 268v14M12 268h14M58 268v14M58 268H44M12 312v-14M12 312h14" />
      <circle cx="60" cy="312" r="15" /><path d="M70 324l14 12" strokeWidth="5" />
      <path d="M46 380v62M38 392l8-12 8 12M34 442h24M12 418q34-22 70 0M82 418q-30 18-62 8M20 426l10-8M20 426l10 10" />
      <path d="M12 508h16v16H12zM37 508h16v16H37zM62 508h16v16H62zM12 536h46v38H12z" /><path d="M26 544v22l20-11z" fill="#c6c2c4" />
      <circle cx="76" cy="618" r="9" /><path d="M70 616h12M70 621h12" />
    </svg>
  </div>
);

const Canvas = () => (
  <main className="relative min-h-[600px] flex-1 overflow-hidden bg-[#dcd7da]">
    <Drawing />
    <div className="absolute top-[6px] left-[3px] flex text-[12px] leading-[16px] text-black">
      <button type="button">[−]</button>
      <button type="button">[Сверху]</button>
      <button type="button">[2D-каркас]</button>
    </div>
    <div className="absolute top-[8px] right-[10px] flex gap-[7px]">
      <button type="button" aria-label="Свернуть чертёж"><Pic w={13} h={14}><path d="M3 21h33v12H3z" stroke="#5c5c60" strokeWidth="3" fill="#f4f4f4" /></Pic></button>
      <button type="button" aria-label="Восстановить чертёж"><Pic w={13} h={14}><path d="M10 3h27v27H10z" stroke="#5c5c60" strokeWidth="3" fill="#f4f4f4" /><path d="M3 10h27v27H3z" stroke="#5c5c60" strokeWidth="4" fill="#f4f4f4" /><path d="M12 19h9v9h-9z" stroke="#5c5c60" strokeWidth="4" /></Pic></button>
      <button type="button" aria-label="Закрыть чертёж"><Pic w={13} h={14}><path d="M6 7l25 26M31 7L6 33" stroke="#4a4a4e" strokeWidth="13" /><path d="M7 8l23 24M30 8L7 32" stroke="#f4f4f4" strokeWidth="5" /></Pic></button>
    </div>
    <ViewCube />
    <NavBar />
    <svg width="80" height="82" viewBox="0 -2 80 82" fill="none" stroke={K} className="absolute bottom-[6px] left-[12px]" aria-hidden="true">
      <path d="M8.500 15V65.500H59M4.500 60.500h9v9h-9zM10 -2l6.500 6L23 -2M16.500 4V11M63 51l13 13M76 51L63 64" />
    </svg>
    <svg width="60" height="58" viewBox="0 0 60 58" fill="none" stroke={K} className="absolute right-0 bottom-0" aria-hidden="true">
      <path d="M49.500 2V46.500M49.500 53.500V58M1 50.500H46.500M52.500 50.500H60M46.500 47.500h6v6h-6z" />
    </svg>
  </main>
);

/* ---------- document tabs and status bar ---------- */

const DocTabs = () => (
  <div className="mt-[4px] flex h-[23px] items-center pl-[12px]">
    <button type="button" className="h-full w-[136px] bg-[#2d3642] pl-5 text-left text-[#a3a9b3] [clip-path:polygon(0_100%,4%_60%,8%_8%,11%_0,90%_0,94%_10%,100%_100%)]">Начало</button>
    <div className="-ml-[6px] flex h-full w-[211px] items-center gap-[11px] bg-[#3b4453] pl-[13px] text-[#eef0f3] [clip-path:polygon(0_100%,2%_10%,4%_0,94%_0,97%_10%,100%_100%)]">
      <button type="button" className="whitespace-nowrap">Чертеж резервуара РВС-1000*</button>
      <button type="button" aria-label="Закрыть вкладку"><Pic w={9} h={11}><path d="M3 5l20 20M23 5L3 25" stroke="#a3a9b3" strokeWidth="5" /></Pic></button>
    </div>
    <button type="button" aria-label="Новая вкладка" className="ml-px flex h-[16px] w-7 items-center justify-center rounded-lg bg-[#2d3642]">
      <Pic w={9} h={9}><path d="M13 1v24M1 13h24" stroke="#c9ced6" strokeWidth="4" /></Pic>
    </button>
  </div>
);

const Status: React.FC<{ name: string; on?: boolean; children: React.ReactNode }> = ({ name, on, children }) => (
  <button type="button" aria-label={name} aria-pressed={on} className={`flex h-6 w-[22px] items-center justify-center ${on ? 'bg-[#5b8fc9]' : ''}`}>
    <Pic w={18} h={18}>{children}</Pic>
  </button>
);

const group = 'flex h-6 items-center bg-[#3b4453]';

const Person = () => <path d="M27 3q5 8 6 22l14 24-15-7-5 9-5-9-15 7 14-24q1-14 6-22z" fill={L} />;

const StatusBar = () => (
  <footer className="flex h-[29px] items-start text-[#e3e6ea]">
    <div className="flex pl-[13px]">
      <button type="button" className="h-[18px] w-[66px] bg-[#3b4453] pb-[2px] font-bold leading-[16px] text-white [clip-path:polygon(0_0,100%_0,93%_100%,7%_100%)]">Модель</button>
      {['Лист1', 'Лист2'].map((t) => (
        <button key={t} type="button" className="ml-[2px] h-[18px] w-[53px] bg-[#2d3642] pb-[2px] leading-[16px] text-[#a3a9b3] [clip-path:polygon(0_0,100%_0,91%_100%,9%_100%)]">{t}</button>
      ))}
      <button type="button" aria-label="Новый лист" className="ml-1 flex h-4 w-6 items-center justify-center rounded-b-lg bg-[#2d3642]">
        <Pic w={9} h={9}><path d="M13 1v24M1 13h24" stroke="#a3a9b3" strokeWidth="4" /></Pic>
      </button>
    </div>
    <div className="mt-[2px] mr-[2px] ml-auto flex items-center gap-[3px] text-[12px]">
      <button type="button" className={`${group} w-[56px] justify-center font-['Roboto']`}>МОДЕЛЬ</button>
      <div className={`${group} gap-[3px] pr-[5px]`}>
        <Status name="Сетка"><path d="M14 2v50M27 2v50M40 2v50M2 14h50M2 27h50M2 40h50" stroke={L} strokeWidth="4" /></Status>
        <Status name="Шаг">{[9, 24, 39].flatMap((y) => [9, 24, 39].map((x) => <Dot key={`${x}-${y}`} x={x + 3} y={y + 3} s={6} c={L} />))}</Status>
        <span className="ml-[2px]"><Caret small /></span>
      </div>
      <div className={`${group} gap-[3px] pr-1`}>
        <Status name="Орто"><path d="M8 3v44h46M8 32h14v14" stroke={L} strokeWidth="3" /></Status>
        <Status name="Полярное отслеживание" on><circle cx="24" cy="29" r="19" stroke={W} strokeWidth="3" /><path d="M24 29h28M24 29L45 6M36 17v24" stroke={W} strokeWidth="3" /></Status>
        <span className="mx-[2px]"><Caret small /></span>
        <Status name="Изометрия"><path d="M8 8l38 40" stroke={R} strokeWidth="3" /><path d="M27 2v50" stroke={G} strokeWidth="3" /><rect x="22" y="22" width="9" height="9" stroke={L} strokeWidth="2" /></Status>
        <span className="ml-1"><Caret small /></span>
      </div>
      <div className={`${group} gap-[2px]`}>
        <Status name="Объектное отслеживание" on><path d="M46 5L6 47h44" stroke={W} strokeWidth="3" /><Dot x={24} y={28} s={8} c={W} /></Status>
        <Status name="Объектная привязка" on><path d="M20 9h30v40H8V22" stroke={W} strokeWidth="3" /><rect x="3" y="4" width="12" height="12" stroke={W} strokeWidth="3" /></Status>
        <span className="mx-[3px]"><Caret small /></span>
      </div>
      <div className={`${group} pr-[3px] pl-px`}>
        <Status name="Вес линий"><path d="M4 9h22M30 9h20" stroke={L} strokeWidth="4" /><path d="M4 20h46" stroke={L} strokeWidth="4" /><path d="M4 32h24M30 34h20" stroke={L} strokeWidth="6" /><path d="M4 45h18M22 46h28" stroke={L} strokeWidth="6" /></Status>
      </div>
      <div className={`${group} gap-[2px] pr-1`}>
        <Status name="Видимость аннотаций" on><g transform="translate(-5 0)"><Person /></g><circle cx="43" cy="12" r="6" stroke={W} strokeWidth="3" /></Status>
        <Status name="Автомасштаб"><g transform="translate(-5 0)"><Person /></g><path d="M46 1L32 15h8l-5 13 15-16h-8z" fill={L} stroke={D} /></Status>
        <Status name="Масштаб аннотаций"><Person /></Status>
        <button type="button" className="flex items-center gap-1 font-['Roboto']">1:1<Caret small /></button>
      </div>
      <div className={`${group} gap-[6px] pr-1`}>
        <Status name="Рабочее пространство"><circle cx="27" cy="27" r="13" stroke={L} strokeWidth="10" /><circle cx="27" cy="27" r="20" stroke={L} strokeWidth="8" strokeDasharray="8 7.7" /></Status>
        <Caret small />
      </div>
      <div className={`${group} px-px`}>
        <Status name="Монитор аннотаций"><path d="M27 2v50M2 27h50" stroke={L} strokeWidth="5" /></Status>
      </div>
      <div className={`${group} px-px`}>
        <Status name="Изолировать объекты"><path d="M4 4h18v18H4zM27 32l10 17H17z" stroke={L} strokeWidth="3" /><circle cx="42" cy="23" r="9" stroke={L} strokeWidth="3" /></Status>
      </div>
      <div className={group}>
        <Status name="Производительность графики"><circle cx="28" cy="20" r="18" fill="#2a62a8" /><path d="M4 10h40M14 2v24M4 22h26" stroke="#a8d0f5" strokeWidth="3" /><path d="M4 32h15v15H4z" fill="#f0b43c" /><path d="M22 36l10 11 19-24" stroke={G} strokeWidth="7" /></Status>
      </div>
      <div className={`${group} gap-[2px] px-px`}>
        <Status name="Полный экран"><path d="M3 8h48v38H3z" stroke={L} strokeWidth="3" /><path d="M14 38l9-8M40 16l-9 8" stroke={L} strokeWidth="3" /><path d="M11 41V30l11 11zM43 13v11L32 13z" fill={L} /></Status>
        <Status name="Адаптация"><path d="M2 9h50M2 27h50M2 45h50" stroke={L} strokeWidth="5" /></Status>
      </div>
    </div>
  </footer>
);

const App: React.FC = () => (
  <div className="flex min-h-screen flex-col border-x-4 border-b-4 border-[#303a48] bg-[#222933] font-['Open_Sans','Noto_Sans',sans-serif] text-[11px] leading-[16px]">
    <header className="flex">
      <button type="button" aria-label="Меню приложения" className="mt-[5px] mr-[9px] ml-px h-10 w-10 shrink-0">
        <AppLogo />
      </button>
      <div className="min-w-0 flex-1">
        <TitleBar />
        <div className="-ml-1"><MenuTabs /></div>
      </div>
    </header>
    <Ribbon />
    <DocTabs />
    <div className="h-1 bg-[#3b4453]" />
    <Canvas />
    <StatusBar />
  </div>
);

export default App;
